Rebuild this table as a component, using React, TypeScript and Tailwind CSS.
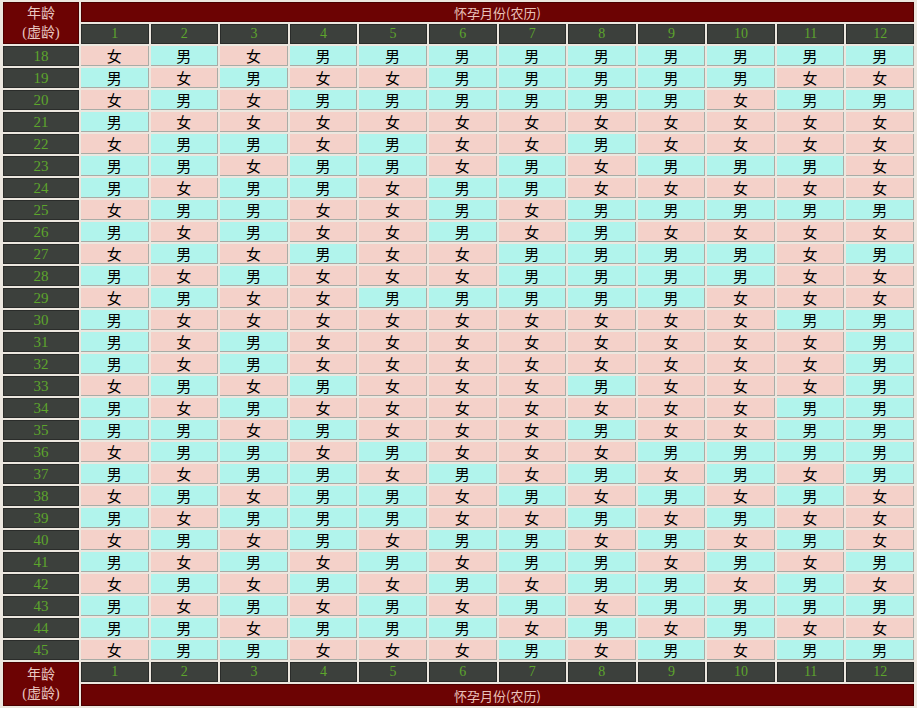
const rows: [number, string][] = [
  [18, "女男女男男男男男男男男男"],
  [19, "男女男女女男男男男男女女"],
  [20, "女男女男男男男男男女男男"],
  [21, "男女女女女女女女女女女女"],
  [22, "女男男女男女女男女女女女"],
  [23, "男男女男男女男女男男男女"],
  [24, "男女男男女男男女女女女女"],
  [25, "女男男女女男女男男男男男"],
  [26, "男女男女女男女男女女女女"],
  [27, "女男女男女女男男男男女男"],
  [28, "男女男女女女男男男男女女"],
  [29, "女男女女男男男男男女女女"],
  [30, "男女女女女女女女女女男男"],
  [31, "男女男女女女女女女女女男"],
  [32, "男女男女女女女女女女女男"],
  [33, "女男女男女女女男女女女男"],
  [34, "男女男女女女女女女女男男"],
  [35, "男男女男女女女男女女男男"],
  [36, "女男男女男女女女男男男男"],
  [37, "男女男男女男女男女男女男"],
  [38, "女男女男男女男女男女男女"],
  [39, "男女男男男女女男女男女女"],
  [40, "女男女男女男男女男女男女"],
  [41, "男女男女男女男男女男女男"],
  [42, "女男女男女男女男男女男女"],
  [43, "男女男女男女男女男男男男"],
  [44, "男男女男男男女男女男女女"],
  [45, "女男男女女女男女男女男男"],
];

const months = [1, 2, 3, 4, 5, 6, 7, 8, 9, 10, 11, 12];

function AgeHeader() {
  return (
    <div className="row-span-2 bg-[#6c0303] border border-[#4a0000] flex flex-col items-center justify-center text-[#e9c9c2] text-[14px] leading-[19px] font-['Liberation_Serif','Noto_Sans_CJK_SC',serif]">
      <span>年龄</span>
      <span>(虚龄)</span>
    </div>
  );
}

function TitleBar() {
  return (
    <div className="col-span-12 bg-[#6c0303] border border-[#4a0000] flex items-center justify-center text-[#e9c2ba] text-[13px] leading-none font-['Noto_Sans_CJK_SC',sans-serif]">
      怀孕月份(农历)
    </div>
  );
}

function MonthRow() {
  return (
    <>
      {months.map((m) => (
        <div
          key={m}
          className="bg-[#3c403c] border border-[#2a2c2a] flex items-center justify-center text-[#5da52c] text-[14px] leading-none font-['Liberation_Serif',serif]"
        >
          {m}
        </div>
      ))}
    </>
  );
}

export default function App() {
  return (
    <div className="w-[917px] h-[708px] bg-[#ece7df] p-[2px] pl-[3px] pr-[3px]">
      <div className="grid grid-cols-[76px_repeat(12,1fr)] grid-rows-[20px_20px_repeat(28,20px)_20px_22px] gap-[2px]">
        <AgeHeader />
        <TitleBar />
        <MonthRow />

        {rows.map(([age, cells]) => (
          <div key={age} className="contents">
            <div className="bg-[#3c403c] border border-[#2a2c2a] flex items-center justify-center text-[#5da52c] text-[15px] leading-none font-['Liberation_Serif',serif]">
              {age}
            </div>
            {cells.split("").map((c, i) => (
              <div
                key={i}
                className={`${
                  c === "男" ? "bg-[#b1f4ec]" : "bg-[#f4d1c9]"
                } border-b border-r border-[#a9aca6] flex items-center justify-center overflow-hidden text-black text-[15px] leading-none font-['Noto_Sans_CJK_SC',sans-serif]`}
              >
                {c}
              </div>
            ))}
          </div>
        ))}

        <AgeHeader />
        <MonthRow />
        <TitleBar />
      </div>
    </div>
  );
}
